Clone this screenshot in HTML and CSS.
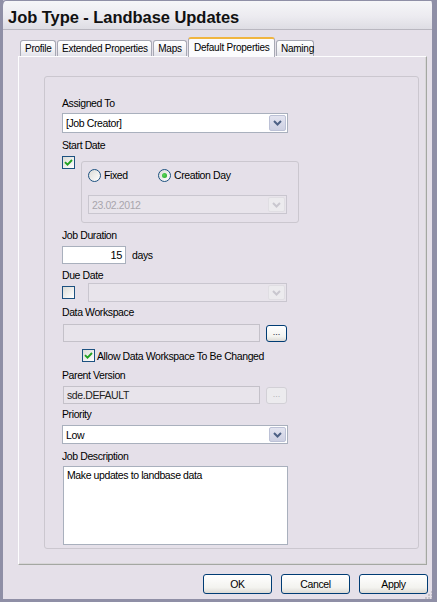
FILE: index.html
```html
<!DOCTYPE html>
<html>
<head>
<meta charset="utf-8">
<link rel="stylesheet" href="styles.css">
</head>
<body>
<div class="window">
  <div class="titlebar"><span class="title">Job Type - Landbase Updates</span></div>
  <div class="client">
    <div class="tabs">
      <div class="tab t-profile">Profile</div>
      <div class="tab t-ext">Extended Properties</div>
      <div class="tab t-maps">Maps</div>
      <div class="tab active t-def">Default Properties</div>
      <div class="tab t-naming">Naming</div>
    </div>
    <div class="panel">
      <div class="group">
        <div class="label l-assigned">Assigned To</div>
        <div class="combo c-assigned">
          <span class="combo-text">[Job Creator]</span>
          <span class="combo-btn"><svg width="9" height="6" viewBox="0 0 9 6"><path d="M1 1 L4.5 4.5 L8 1" fill="none" stroke="#4d6185" stroke-width="2"/></svg></span>
        </div>
        <div class="label l-start">Start Date</div>
        <div class="start-row">
          <span class="check checked"><svg width="9" height="9" viewBox="0 0 9 9"><path d="M1 4.2 L3.5 6.7 L8 2" fill="none" stroke="#21a121" stroke-width="1.9"/></svg></span>
          <div class="subgroup">
            <div class="radio-row">
              <span class="radio-item r-fixed"><span class="radio"></span><span class="rlabel">Fixed</span></span>
              <span class="radio-item"><span class="radio on"><span class="dot"></span></span><span class="rlabel">Creation Day</span></span>
            </div>
            <div class="combo disabled c-date">
              <span class="combo-text">23.02.2012</span>
              <span class="combo-btn"><svg width="9" height="6" viewBox="0 0 9 6"><path d="M1 1 L4.5 4.5 L8 1" fill="none" stroke="#c9c7cf" stroke-width="2"/></svg></span>
            </div>
          </div>
        </div>
        <div class="label l-dur">Job Duration</div>
        <div class="dur-row">
          <span class="textbox numeric">15</span>
          <span class="unit">days</span>
        </div>
        <div class="label l-due">Due Date</div>
        <div class="due-row">
          <span class="check"></span>
          <div class="combo disabled c-due">
            <span class="combo-text"></span>
            <span class="combo-btn"><svg width="9" height="6" viewBox="0 0 9 6"><path d="M1 1 L4.5 4.5 L8 1" fill="none" stroke="#c9c7cf" stroke-width="2"/></svg></span>
          </div>
        </div>
        <div class="label l-ws">Data Workspace</div>
        <div class="browse-row r-ws">
          <span class="textbox disabled wide"></span>
          <span class="btn small">...</span>
        </div>
        <div class="allow-row">
          <span class="check checked"><svg width="9" height="9" viewBox="0 0 9 9"><path d="M1 4.2 L3.5 6.7 L8 2" fill="none" stroke="#21a121" stroke-width="1.9"/></svg></span>
          <span class="clabel">Allow Data Workspace To Be Changed</span>
        </div>
        <div class="label l-pv">Parent Version</div>
        <div class="browse-row r-pv">
          <span class="textbox disabled wide dark">sde.DEFAULT</span>
          <span class="btn small off">...</span>
        </div>
        <div class="label l-pri">Priority</div>
        <div class="combo c-pri">
          <span class="combo-text">Low</span>
          <span class="combo-btn"><svg width="9" height="6" viewBox="0 0 9 6"><path d="M1 1 L4.5 4.5 L8 1" fill="none" stroke="#4d6185" stroke-width="2"/></svg></span>
        </div>
        <div class="label l-desc">Job Description</div>
        <div class="textarea">Make updates to landbase data</div>
      </div>
    </div>
    <div class="buttons">
      <span class="btn big">OK</span>
      <span class="btn big">Cancel</span>
      <span class="btn big">Apply</span>
    </div>
  </div>
  <svg class="grip" width="10" height="10" viewBox="0 0 10 10">
    <rect x="8" y="2" width="2" height="2" fill="#c6c3ca"/>
    <rect x="5" y="5" width="2" height="2" fill="#c6c3ca"/>
    <rect x="8" y="5" width="2" height="2" fill="#c6c3ca"/>
    <rect x="2" y="8" width="2" height="2" fill="#c6c3ca"/>
    <rect x="5" y="8" width="2" height="2" fill="#c6c3ca"/>
    <rect x="8" y="8" width="2" height="2" fill="#c6c3ca"/>
  </svg>
</div>
</body>
</html>
```

FILE: styles.css
```css
html, body {
  margin: 0;
  padding: 0;
  background: #e5e0e9;
}
body {
  font-family: "Liberation Sans", Arial, sans-serif;
  font-size: 10.5px;
  letter-spacing: -0.4px;
  color: #000;
}
.window {
  position: relative;
  width: 437px;
  height: 602px;
  box-sizing: border-box;
  border-left: 3px solid #8f8fa6;
  border-right: 5px solid #8f8fa6;
  border-bottom: 3px solid #8f8fa6;
  background: #e5e0e9;
  display: flex;
  flex-direction: column;
  overflow: hidden;
}
.titlebar {
  flex: none;
  height: 28px;
  border-bottom: 1px solid #b9b7c0;
  background: linear-gradient(#f6f6f8, #ecebf0 55%, #dedde4);
  margin-left: -3px;
  margin-right: -5px;
  padding-left: 5px;
  box-sizing: content-box;
  border-top: 1px solid #8f8fa6;
  border-radius: 6px 6px 0 0;
  border-left: 3px solid #8f8fa6;
  border-right: 5px solid #8f8fa6;
}
.title {
  display: block;
  font-size: 16.5px;
  font-weight: bold;
  letter-spacing: -0.05px;
  line-height: 19px;
  padding-top: 7px;
  color: #111;
}
.client {
  flex: none;
  padding-left: 15px;
}
.tabs {
  display: flex;
  align-items: flex-end;
  height: 19px;
  margin-top: 7px;
  padding-left: 2px;
  position: relative;
  z-index: 2;
  font-size: 10px;
  letter-spacing: -0.25px;
}
.tab {
  flex: none;
  height: 15px;
  line-height: 15px;
  padding: 0 4px;
  margin-right: 1px;
  border: 1px solid #a7a9b4;
  border-bottom: none;
  border-radius: 3px 3px 0 0;
  background: linear-gradient(#ffffff, #f2f2f5 60%, #e2e2ea);
  box-sizing: content-box;
  white-space: nowrap;
  text-align: center;
}
.tab.active {
  height: 18px;
  line-height: 17px;
  margin-bottom: -1px;
  border-top: 2px solid #f0b541;
  background: #fbfbfd;
  padding: 0 5px;
}
.t-profile { width: 26px; }
.t-ext { width: 85px; }
.t-maps { width: 24px; }
.t-def { width: 75px; }
.t-naming { width: 28px; }

.panel {
  width: 409px;
  height: 509px;
  border: 1px solid #a4a7a2;
  border-left-color: #fdfdfe;
  border-top-color: #fdfdfe;
  box-shadow: inset -1px -1px 0 #d8d6d8;
  padding-top: 19px;
  box-sizing: border-box;
  position: relative;
  z-index: 1;
}
.group {
  width: 375px;
  height: 473px;
  margin-left: 25px;
  border: 1px solid #cbc7cf;
  border-radius: 3px;
  padding: 20px 0 0 17px;
  box-sizing: border-box;
  display: flex;
  flex-direction: column;
  align-items: flex-start;
}
.label {
  flex: none;
  height: 13px;
  line-height: 13px;
  white-space: nowrap;
}
.l-start { margin-top: 6px; }
.l-dur { margin-top: 6px; }
.l-due { margin-top: 5px; }
.l-ws { margin-top: 4px; }
.l-pv { margin-top: 7px; }
.l-pri { margin-top: 4px; }
.l-desc { margin-top: 6px; }

.combo {
  flex: none;
  position: relative;
  width: 226px;
  height: 19px;
  border: 1px solid #a9b0bd;
  background: #fff;
  box-sizing: border-box;
  display: flex;
  align-items: center;
}
.c-assigned { height: 20px; margin-top: 3px; }
.c-pri { margin-top: 4px; }
.combo-text {
  flex: 1;
  padding-left: 3px;
  white-space: nowrap;
}
.combo-btn {
  width: 17px;
  height: calc(100% - 2px);
  margin-right: 1px;
  box-sizing: border-box;
  border: 1px solid #bcc1d6;
  border-radius: 2px;
  background: linear-gradient(#e3e4f0, #cdd0e2);
  display: flex;
  align-items: center;
  justify-content: center;
}
.combo.disabled {
  background: #e8e4eb;
  border-color: #c9c6cf;
  color: #a9a6ad;
}
.combo.disabled .combo-btn {
  background: #ecebee;
  border-color: #e0dee3;
}

.check {
  width: 13px;
  height: 13px;
  box-sizing: border-box;
  border: 1px solid #1c5180;
  background: linear-gradient(135deg, #dcdcd7, #ffffff);
  display: inline-flex;
  align-items: center;
  justify-content: center;
  flex: none;
}
.start-row {
  flex: none;
  display: flex;
  align-items: flex-start;
  margin-top: 4px;
  height: 67px;
}
.subgroup {
  margin-left: 6px;
  margin-top: 5px;
  width: 218px;
  height: 62px;
  box-sizing: border-box;
  border: 1px solid #cbc7cf;
  border-radius: 3px;
  padding: 7px 0 0 6px;
  display: flex;
  flex-direction: column;
}
.radio-row {
  display: flex;
  align-items: center;
  height: 13px;
}
.radio-item {
  display: inline-flex;
  align-items: center;
}
.r-fixed { width: 70px; }
.radio {
  width: 13px;
  height: 13px;
  box-sizing: border-box;
  border: 1px solid #1c5180;
  border-radius: 50%;
  background: linear-gradient(135deg, #dcdcd7, #ffffff);
  display: inline-flex;
  align-items: center;
  justify-content: center;
}
.dot {
  width: 5px;
  height: 5px;
  border-radius: 50%;
  background: radial-gradient(circle at 40% 40%, #5ad85a, #21a121);
}
.rlabel {
  margin-left: 3px;
  line-height: 13px;
}
.c-date {
  width: 199px;
  margin-top: 13px;
}
.dur-row {
  flex: none;
  display: flex;
  align-items: center;
  margin-top: 4px;
  height: 18px;
}
.textbox {
  box-sizing: border-box;
  height: 18px;
  border: 1px solid #a9b0bd;
  background: #fff;
  line-height: 16px;
  padding: 0 3px;
  white-space: nowrap;
}
.numeric {
  width: 64px;
  text-align: right;
  font-size: 11px;
  padding-right: 3px;
}
.unit {
  margin-left: 6px;
}
.due-row {
  flex: none;
  display: flex;
  align-items: center;
  margin-top: 1px;
  height: 19px;
}
.c-due {
  margin-left: 13px;
  width: 199px;
}
.browse-row {
  flex: none;
  display: flex;
  align-items: center;
  height: 18px;
}
.r-ws { margin-top: 5px; }
.r-pv { margin-top: 4px; }
.textbox.wide {
  width: 197px;
  margin-left: 1px;
}
.textbox.disabled {
  background: #e8e4eb;
  border-color: #c4c1c9;
}
.textbox.dark { color: #222; }
.btn {
  box-sizing: border-box;
  border: 1px solid #003c74;
  border-radius: 3px;
  background: linear-gradient(#ffffff, #f3f3ef 70%, #dcdad5);
  display: inline-flex;
  align-items: center;
  justify-content: center;
  white-space: nowrap;
}
.btn.small {
  width: 21px;
  height: 17px;
  margin-left: 6px;
  padding-bottom: 2px;
  font-size: 9px;
  letter-spacing: 0;
  color: #223;
}
.btn.small.off {
  border-color: #d2d0d6;
  background: #ecebee;
  color: #b4b2b8;
}
.allow-row {
  flex: none;
  display: flex;
  align-items: center;
  margin-top: 7px;
  margin-left: 20px;
  height: 13px;
}
.clabel { margin-left: 2px; }
.textarea {
  flex: none;
  margin-top: 3px;
  margin-left: 1px;
  width: 225px;
  height: 79px;
  box-sizing: border-box;
  border: 1px solid #a9b0bd;
  background: #fff;
  padding: 2px 3px;
  line-height: 13px;
}
.buttons {
  display: flex;
  margin-top: 9px;
  margin-left: 185px;
  gap: 9px;
}
.btn.big {
  width: 69px;
  height: 20px;
  padding-bottom: 1px;
}
.grip {
  position: absolute;
  right: -1px;
  bottom: 0px;
}
```
